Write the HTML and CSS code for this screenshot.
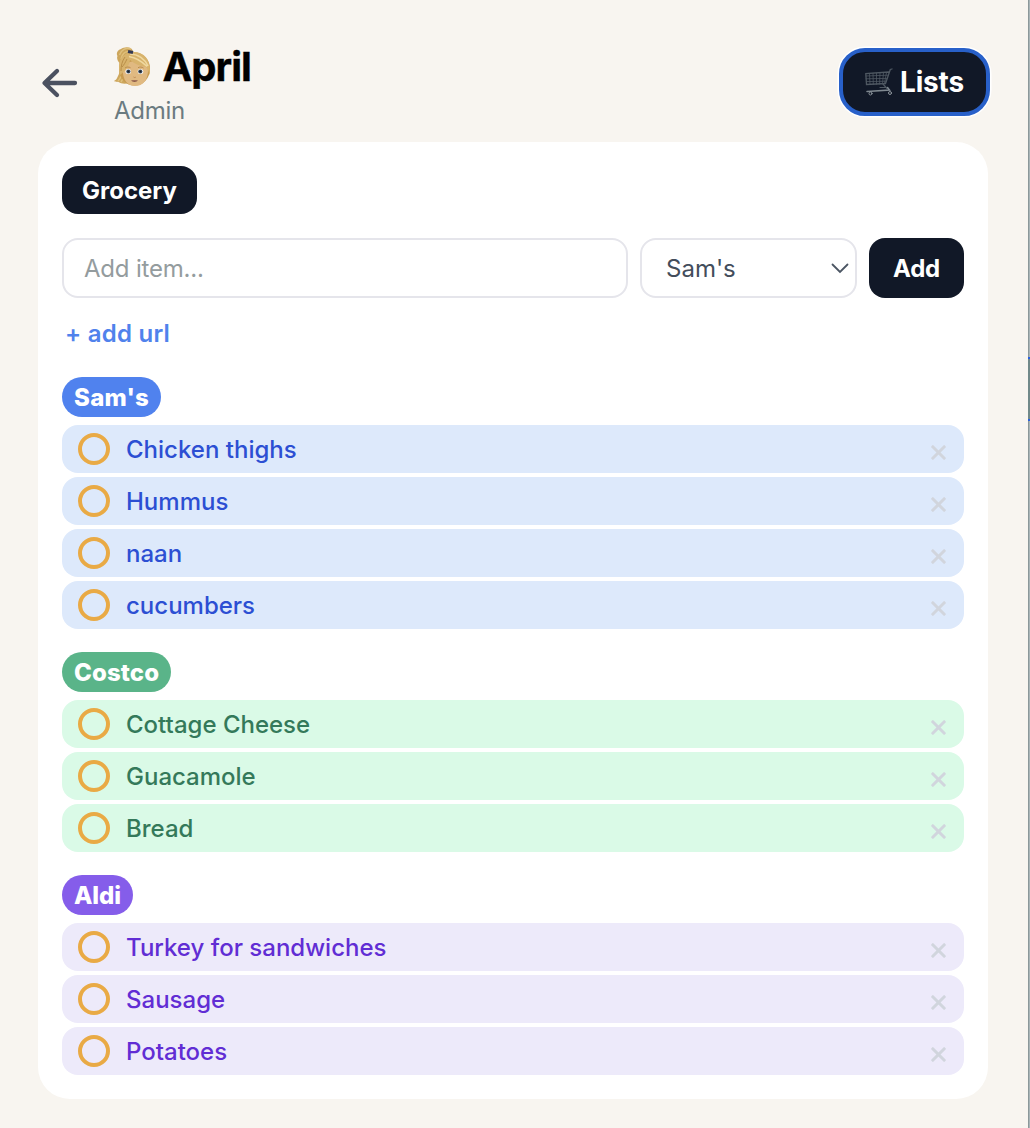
FILE: index.html
```html
<!DOCTYPE html>
<html lang="en">
<head>
    <meta charset="UTF-8">
    <meta name="viewport" content="width=device-width, initial-scale=1.0">
    <title>April - Lists</title>
    <link rel="stylesheet" href="styles.css">
</head>
<body>
    <div class="app">
        <main class="page">
            <header class="header">
                <button class="back-btn" aria-label="Back">
                    <svg width="38" height="32" viewBox="0 0 38 32" fill="none" stroke="#4b5160" stroke-width="4.3" stroke-linecap="round" stroke-linejoin="round">
                        <path d="M34 16H4M16 4L3.500 16L16 28"/>
                    </svg>
                </button>
                <div class="profile">
                    <div class="profile-name">
                        <svg class="avatar" width="36" height="40" viewBox="0 0 36 40">
                            <!-- ponytail -->
                            <path d="M19 4C17-1 10 0 7 2 3 3 2 7 3.500 9c-1 2 0 5 2 7 1.500 4 .5 10-2 14-.5 2-2 3-3.500 4 2 1 3 1 4 .8 3 2.200 8 2.200 11 1.200l6-26z" fill="#cda65c"/>
                            <path d="M17 2C12 0 7 3 5.500 8M15 5c-4-1-7 2-8 7M8 22c.5 5-1 9-4 12M10 27c0 4-1.500 6-3 8" stroke="#dfc07c" stroke-width="1.500" fill="none"/>
                            <ellipse cx="20.500" cy="22" rx="15.500" ry="16.500" fill="#c79a4e"/>
                            <!-- face -->
                            <path d="M9 22c-1 11 5 17 12 17 8 0 13.500-6 13-18C32 12 12 11 9 22z" fill="#e0b981"/>
                            <!-- fringe -->
                            <path d="M6 28C2 12 10 5 20 5c11 0 18 10 15.500 23-1-4-2-6-3.500-8-6-1-11-3-16-7-1 6-4 10-10 15z" fill="#d8b36c"/>
                            <path d="M16 7c8 0 15 5 18 12M15 9.500c6 1 13 5 18 10" stroke="#f0d9a0" stroke-width="1.500" fill="none"/>
                            <path d="M11 10c-3 4-4 9-4 14M13 12c-1.500 3-3 6-5 8" stroke="#b98e48" fill="none"/>
                            <path d="M14 4.500l5 1" stroke="#343a55" stroke-width="3"/>
                            <ellipse cx="14.200" cy="24.500" rx="2.800" ry="2.500" fill="#fff"/>
                            <ellipse cx="26.500" cy="24.500" rx="2.800" ry="2.500" fill="#fff"/>
                            <circle cx="14.400" cy="24.500" r="2.100" fill="#3f4e60"/>
                            <circle cx="26.300" cy="24.500" r="2.100" fill="#3f4e60"/>
                            <circle cx="14.400" cy="24.500" r="1" fill="#17202a"/>
                            <circle cx="26.300" cy="24.500" r="1" fill="#17202a"/>
                            <path d="M11 21c1.500-1.200 4-1.200 5.500-.3M24 20.700c1.500-.9 4-.9 5.500.3" stroke="#b98c4c" fill="none"/>
                            <path d="M19.500 30c.6.700 1.700.700 2.400 0" stroke="#bd8a55" fill="none"/>
                            <path d="M17 33.500c2-.5 5-.5 7 0-1.500 1.900-5.500 1.900-7 0z" fill="#8c5a4a"/>
                        </svg>
                        <h1>April</h1>
                    </div>
                    <p class="role">Admin</p>
                </div>
                <button class="lists-btn">
                    <svg class="cart" width="28" height="28" viewBox="0 0 28 28" fill="none" stroke="#4f5862" stroke-linecap="round">
                        <path d="M27 1l-1.700.5L20.500 15.500 1.500 16.500.8 5.500l23-1.500" stroke-width="1.300"/>
                        <path d="M1 8l22-.8M1 10.800l21-.4M1.300 13.600l20-.4M4.500 5.500l.5 11M8 5.300l.3 11M11.500 5.200v11M15 5l-.4 11M18.500 4.800l-1 11M21.500 4.500l-2 11" stroke-width=".8"/>
                        <path d="M18 16l4 4.500M15 19.500h6" stroke-width="1.200"/>
                        <path d="M2 23.500l22.500-1.500-2-2.500" stroke="#7f8890" stroke-width="1.500"/>
                        <circle cx="5.500" cy="25.500" r="1.500" stroke="#8b939a"/>
                        <circle cx="25" cy="25" r="1.500" stroke="#8b939a"/>
                    </svg>
                    <span>Lists</span>
                </button>
            </header>

            <section class="card">
                <button class="tab">Grocery</button>
                <form class="add-form">
                    <input type="text" class="item-input" placeholder="Add item...">
                    <div class="store-select">
                        <span>Sam's</span>
                        <svg width="18" height="11" viewBox="0 0 18 11" fill="none" stroke="#4b5563" stroke-width="1.800" stroke-linecap="round">
                            <path d="M1.500 1.500L9 9L16.500 1.500"/>
                        </svg>
                    </div>
                    <button type="button" class="add-btn">Add</button>
                </form>
                <a class="add-url">+ add url</a>

                <div class="store sams">
                    <h2 class="store-name">Sam's</h2>
                    <ul>
                        <li><i class="check"></i><span>Chicken thighs</span><b class="remove"></b></li>
                        <li><i class="check"></i><span>Hummus</span><b class="remove"></b></li>
                        <li><i class="check"></i><span>naan</span><b class="remove"></b></li>
                        <li><i class="check"></i><span>cucumbers</span><b class="remove"></b></li>
                    </ul>
                </div>
                <div class="store costco">
                    <h2 class="store-name">Costco</h2>
                    <ul>
                        <li><i class="check"></i><span>Cottage Cheese</span><b class="remove"></b></li>
                        <li><i class="check"></i><span>Guacamole</span><b class="remove"></b></li>
                        <li><i class="check"></i><span>Bread</span><b class="remove"></b></li>
                    </ul>
                </div>
                <div class="store aldi">
                    <h2 class="store-name">Aldi</h2>
                    <ul>
                        <li><i class="check"></i><span>Turkey for sandwiches</span><b class="remove"></b></li>
                        <li><i class="check"></i><span>Sausage</span><b class="remove"></b></li>
                        <li><i class="check"></i><span>Potatoes</span><b class="remove"></b></li>
                    </ul>
                </div>
            </section>
        </main>
        <div class="edge">
            <div class="edge-mark"></div>
        </div>
    </div>
</body>
</html>
```
FILE: styles.css
```css
* {
    box-sizing: border-box;
    margin: 0;
    padding: 0;
}
body {
    background: #f8f5f0;
    font-family: Inter, "Liberation Sans", sans-serif;
    font-size: 24px;
    color: #000;
    overflow: hidden;
}
button, input {
    font: inherit;
    border: none;
    background: none;
}
.app {
    display: flex;
    height: 1128px;
}
.page {
    flex: 1;
    padding: 0 40px 0 38px;
}
.header {
    display: flex;
    height: 142px;
}
.back-btn {
    width: 76px;
    padding-top: 65px;
    padding-left: 3px;
    text-align: left;
    line-height: 0;
    height: 100px;
}
.profile {
    flex: 1;
    padding-top: 43px;
}
.profile-name {
    display: flex;
    align-items: center;
    height: 48px;
    gap: 12.5px;
}
h1 {
    font-size: 40px;
    line-height: 48px;
    font-weight: 700;
    letter-spacing: -1px;
    -webkit-text-stroke: 0.4px #000;
}
.role {
    margin-top: 4px;
    line-height: 32px;
    color: #6b7b80;
    letter-spacing: -0.3px;
}
.lists-btn {
    display: flex;
    align-items: center;
    justify-content: center;
    gap: 7px;
    width: 151px;
    height: 68px;
    margin: 48px -2px 0 0;
    border: 4px solid #2860c9;
    border-radius: 26px;
    box-shadow: 0 0 0 1.5px #fff;
    background: #111827;
    color: #fff;
    font-size: 28px;
    font-weight: 700;
    letter-spacing: -0.2px;
}
.card {
    background: #fff;
    border-radius: 32px;
    height: 957px;
    padding: 24px;
}
.tab {
    display: block;
    width: 135px;
    height: 48px;
    border-radius: 16px;
    background: #111827;
    color: #fff;
    font-weight: 700;
}
.add-form {
    display: flex;
    gap: 12px;
    height: 60px;
    margin-top: 24px;
}
.item-input {
    width: 566px;
    padding: 0 20px;
    border: 2px solid #e5e5eb;
    border-radius: 16px;
    letter-spacing: -0.2px;
}
.item-input::placeholder {
    color: #949c9e;
    opacity: 1;
}
.store-select {
    display: flex;
    align-items: center;
    justify-content: space-between;
    width: 217px;
    padding: 0 6px 0 24px;
    border: 2px solid #e5e5eb;
    border-radius: 16px;
    color: #434d5b;
}
.add-btn {
    width: 95px;
    border-radius: 16px;
    background: #111827;
    color: #fff;
    font-weight: 700;
    letter-spacing: -0.2px;
}
.add-url {
    display: block;
    margin: 20px 0 27px 3px;
    line-height: 32px;
    color: #5082ec;
    font-weight: 600;
    letter-spacing: 0.25px;
}
.store {
    margin-bottom: 23px;
}
.store-name {
    width: fit-content;
    height: 40px;
    line-height: 41px;
    padding: 0 12px;
    margin-bottom: 8px;
    border-radius: 20px;
    color: #fff;
    font-size: 24px;
    font-weight: 800;
    letter-spacing: 0.1px;
}
.store ul {
    display: flex;
    flex-direction: column;
    gap: 4px;
    list-style: none;
}
.store li {
    display: flex;
    align-items: center;
    height: 48px;
    padding: 0 16px;
    border-radius: 16px;
    font-weight: 500;
}
.store li span {
    flex: 1;
    padding-left: 16px;
}
.check {
    width: 32px;
    height: 32px;
    border: 4px solid #e9aa45;
    border-radius: 50%;
}
/* the x is two crossed bars */
.remove {
    display: grid;
    place-items: center;
    width: 19px;
    height: 19px;
    margin-top: 6px;
    transform: rotate(45deg);
}
.remove::before,
.remove::after {
    content: "";
    grid-area: 1 / 1;
    width: 19px;
    height: 3px;
    border-radius: 1px;
    background: #d1d5dd;
}
.remove::after {
    transform: rotate(90deg);
}
.sams .store-name { background: #5082ee; letter-spacing: 0.3px; }
.sams li { background: #dde9fb; color: #2c4fd3; }
.costco .store-name { background: #5ab489; }
.costco li { background: #dafae7; color: #34795a; }
.aldi .store-name { background: #855dea; letter-spacing: -0.1px; }
.aldi li { background: #edeafa; color: #612dd4; }
/* sliver of the neighbouring window */
.edge {
    width: 2px;
    padding-top: 357px;
    background: linear-gradient(90deg, #8c989a 50%, #a9b5b8 50%);
}
.edge-mark {
    height: 64px;
    background: #71898a;
    border-top: 2px solid #2860e0;
    border-bottom: 2px solid #2860e0;
}
```
